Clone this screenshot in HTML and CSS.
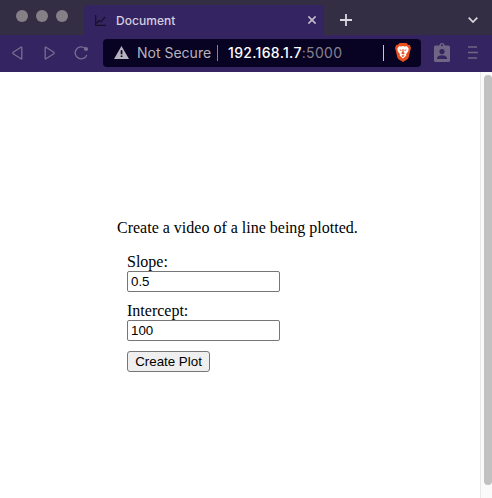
FILE: index.html
```html
<!DOCTYPE html>
<html lang="en">
<head>
<meta charset="utf-8">
<title>Document</title>
<link rel="stylesheet" href="styles.css">
</head>
<body>
<div class="browser">
  <header class="tabbar">
    <div class="lights"><i></i><i></i><i></i></div>
    <div class="tab">
      <svg class="favicon" width="11" height="11" viewBox="0 0 11 11"><path d="M.7 0v10.300H11M1.500 8.500 4 5.500l2 1.300L10 2"/></svg>
      <span class="tab-title">Document</span>
      <svg class="close" width="8" height="8" viewBox="0 0 8 8"><path d="M.4.4l7.200 7.200M7.600.4.4 7.600"/></svg>
    </div>
    <svg class="plus" width="12" height="12" viewBox="0 0 12 12"><path d="M6 0v12M0 6h12"/></svg>
    <svg class="chevron" width="10" height="6" viewBox="0 0 10 6"><path d="M.7.7 5 5 9.300.7"/></svg>
  </header>
  <nav class="toolbar">
    <svg class="back" width="11" height="14" viewBox="0 0 11 14"><path d="M9.800 1.500v11q0 .8-.8.300L1.200 7.700q-.8-.7 0-1.400L9 1.200q.8-.5.8.3z"/></svg>
    <svg class="forward" width="11" height="14" viewBox="0 0 11 14"><path d="M1.200 1.500v11q0 .8.800.3l7.800-5.100q.8-.7 0-1.400L2 1.200q-.8-.5-.8.3z"/></svg>
    <svg class="reload" width="15" height="14" viewBox="0 0 15 14"><path d="M11 2.200A6 6 0 1 0 12.800 9"/><circle class="reload-head" cx="12" cy="3" r="2.100"/></svg>
    <div class="address">
      <svg class="warning" width="15" height="13" viewBox="0 0 15 13"><path d="M7.500 0 15 13H0z" fill="#b7b3be"/><path d="M6.700 4.300h1.700v4H6.700zM6.700 9.500h1.700V11H6.700z" fill="#080322"/></svg>
      <span class="insecure">Not Secure</span>
      <i class="rule"></i>
      <span class="url">192.168.1.7<span class="port">:5000</span></span>
      <i class="rule rule-bright"></i>
      <svg class="shield" width="16" height="19" viewBox="0 0 16 19"><path d="M4.500 0h7l1.500 1.700 1.800.2L16 5l-.6 2-1.700 7.200q-.5 1.700-2 2.600L8 19l-3.700-2.200q-1.500-.9-2-2.600L.6 7 0 5l1.200-3.100L3 1.700z" fill="#e6501d"/><path d="M4 3.300 6.500 3.500 8 3l1.500.5 2.500-.2 1.700 2.400-.6 2.800-2.100 2.700.4 1.300L8 15.600l-3.400-3.100.4-1.300-2.100-2.700-.6-2.800z" fill="#fff"/><path d="M4.200 6.200l2.500.7-.6 1.300zM11.800 6.200l-2.500.7.6 1.300zM7.500 6h1l.2 3.300 1.300 1-2 1.300-2-1.300 1.300-1zM6.300 12.800 8 12l1.700.8L8 14z" fill="#e6501d"/></svg>
    </div>
    <svg class="badge" width="16" height="19" viewBox="0 0 16 19"><path d="M1.500 2.500h4V2a2.500 2 0 0 1 5 0v.5h4Q16 2.500 16 4v13.500q0 1.500-1.500 1.500h-13Q0 19 0 17.500V4q0-1.500 1.500-1.500z" fill="#716585"/><circle cx="8" cy="2.300" r="1" fill="#35245f"/><circle cx="8" cy="8.600" r="2.600" fill="#35245f"/><path d="M3 16v-1.500Q4.500 12.300 8 12.300t5 2.200V16z" fill="#35245f"/></svg>
    <svg class="menu" width="10" height="13" viewBox="0 0 10 13"><path d="M0 1h9M0 6.500h10M0 12h9"/></svg>
  </nav>
  <div class="viewport">
    <main class="page">
      <p class="intro">Create a video of a line being plotted.</p>
      <form class="plot-form">
        <label class="field">Slope:<input type="text" value="0.5"></label>
        <label class="field">Intercept:<input type="text" value="100"></label>
        <button type="button">Create Plot</button>
      </form>
    </main>
    <div class="scrollbar"><div class="thumb"></div></div>
  </div>
</div>
</body>
</html>
```
FILE: styles.css
```css
* { box-sizing: border-box; }
body { margin: 0; background: #fff; overflow: hidden; }
svg { display: block; flex: none; fill: none; }
.browser { display: flex; flex-direction: column; height: 498px; }
.tabbar { display: flex; align-items: center; height: 35px; padding-top: 5px; background: #332e43; font-family: Inter, sans-serif; flex: none; }
.lights { display: flex; gap: 8px; width: 84px; padding: 0 0 8px 16px; }
.lights i { width: 12px; height: 12px; border-radius: 50%; background: #858088; }
.tab { display: flex; align-items: center; width: 240px; height: 30px; padding: 0 8px 0 11px; background: #342461; border-radius: 4px 4px 0 0; }
.favicon { stroke: #17112b; stroke-width: 1.2; }
.tab-title { flex: 1; margin-left: 10px; font-size: 12px; font-weight: 500; letter-spacing: .05px; color: #d5cfdf; }
.close { stroke: #c3bbce; stroke-width: 1.6; }
.plus { margin-left: 16px; stroke: #dad8de; stroke-width: 1.8; }
.chevron { margin-left: auto; margin-right: 14px; stroke: #dad8de; stroke-width: 1.7; }
.toolbar { display: flex; align-items: center; height: 37px; padding: 0 14px 2px 12px; background: #342461; font-family: Inter, sans-serif; flex: none; }
.back, .forward, .reload { stroke: #7c6c91; stroke-width: 1.3; }
.forward { margin-left: 21px; }
.reload { margin-left: 19px; }
.reload-head { fill: #7c6c91; stroke: none; }
.address { display: flex; align-items: center; width: 318px; height: 28px; margin-left: 14px; padding: 0 10px 0 11px; border-radius: 4px; background: #080322; font-size: 14px; white-space: nowrap; }
.insecure { width: 80px; margin-left: 8px; color: #b7b3be; }
.rule { width: 1px; height: 16px; background: #85818e; }
.url { margin-left: 10px; color: #fff; font-weight: 500; letter-spacing: .32px; }
.port { color: #85818e; font-weight: 400; }
.rule-bright { margin-left: auto; background: #c9c7cd; }
.shield { margin-left: 11px; }
.badge { margin-left: 13px; }
.menu { margin-left: auto; stroke: #716585; stroke-width: 1.5; }
.viewport { display: flex; flex: 1; min-height: 0; }
.page { flex: 1; padding: 147px 0 0 117px; font: 16px/18px "Liberation Serif", serif; color: #000; }
.intro { margin: 0 0 16px; white-space: nowrap; }
.plot-form { padding-left: 10px; }
.field { display: block; width: 153px; margin-bottom: 10px; }
.field input { display: block; width: 153px; height: 21px; margin: 0; padding: 1px 3px; border: 1px solid #767676; border-radius: 2px; background: #fff; font: 13.333px "Liberation Sans", sans-serif; color: #000; }
button { display: block; width: 83px; height: 21px; margin: 0; padding: 0; border: 1px solid #767676; border-radius: 3px; background: #efefef; font: 13.333px "Liberation Sans", sans-serif; color: #000; white-space: nowrap; }
.scrollbar { width: 12px; padding: 3px 0 0 3px; border-left: 1px solid #e8e8e8; background: #fafafa; }
.thumb { width: 8px; height: 410px; border-radius: 4px; background: #c1c1c1; }
```
